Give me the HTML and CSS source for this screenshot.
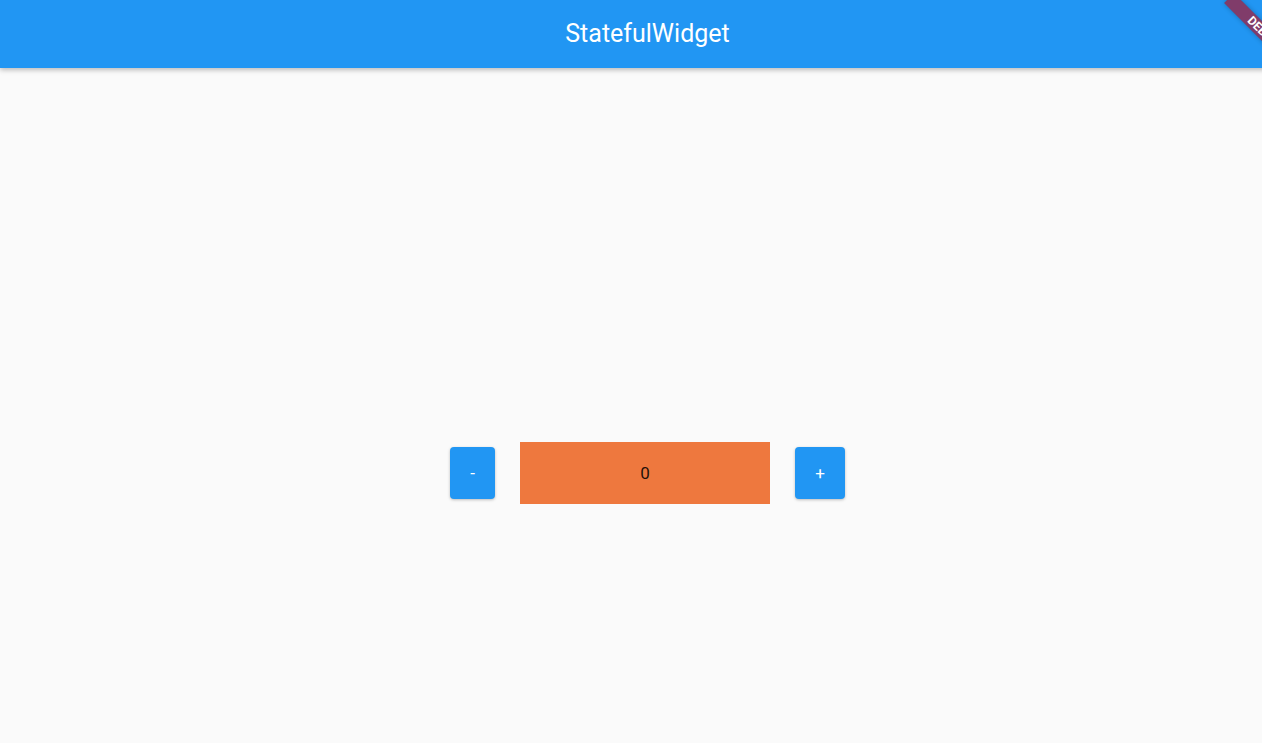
FILE: index.html
```html
<!DOCTYPE html>
<html>
<head>
<meta charset="utf-8">
<link rel="stylesheet" href="styles.css">
</head>
<body>
<div class="app">
  <header class="appbar">
    <h1 class="title">StatefulWidget</h1>
  </header>
  <main class="content">
    <div class="row">
      <button class="btn btn-minus">-</button>
      <div class="counter">0</div>
      <button class="btn btn-plus">+</button>
    </div>
  </main>
  <div class="banner"><span>DEBUG</span></div>
</div>
</body>
</html>
```

FILE: styles.css
```css
html, body {
  margin: 0;
  padding: 0;
  width: 1262px;
  height: 743px;
  overflow: hidden;
  background: #fafafa;
  font-family: Roboto, "Noto Sans", sans-serif;
}
.app {
  position: relative;
  width: 1295px;
  height: 743px;
  display: flex;
  flex-direction: column;
}
.appbar {
  height: 68px;
  background: #2196f3;
  box-shadow: 0 2px 5px rgba(0,0,0,0.26);
  display: flex;
  align-items: center;
  justify-content: center;
  position: relative;
  z-index: 1;
  flex: none;
}
.title {
  margin: 0 0 2px;
  color: #fff;
  font-weight: 400;
  font-size: 25px;
  line-height: 1;
}
.content {
  flex: 1;
  padding-top: 374px;
}
.row {
  display: flex;
  align-items: center;
  justify-content: center;
  gap: 25px;
}
.btn {
  border: none;
  background: #2196f3;
  color: #fff;
  font-family: Roboto, sans-serif;
  font-size: 17px;
  height: 52px;
  padding: 0;
  border-radius: 4px;
  box-shadow: 0 1px 3px rgba(0,0,0,0.25);
}
.btn-minus { width: 45px; }
.btn-plus { width: 50px; }
.counter {
  width: 250px;
  height: 62px;
  background: #ee783e;
  color: rgba(0,0,0,0.87);
  font-size: 17px;
  display: flex;
  align-items: center;
  justify-content: center;
}
.banner {
  position: absolute;
  left: 1214.5px;
  top: 24.5px;
  width: 96px;
  height: 14px;
  background: rgba(160,30,60,0.75);
  transform: rotate(45deg);
  z-index: 2;
  display: flex;
  align-items: center;
  justify-content: center;
  box-shadow: 0 0 5px rgba(0,0,0,0.25);
}
.banner span {
  color: #fff;
  font-size: 12px;
  font-weight: 700;
  line-height: 1;
  font-family: Roboto, sans-serif;
}
```
